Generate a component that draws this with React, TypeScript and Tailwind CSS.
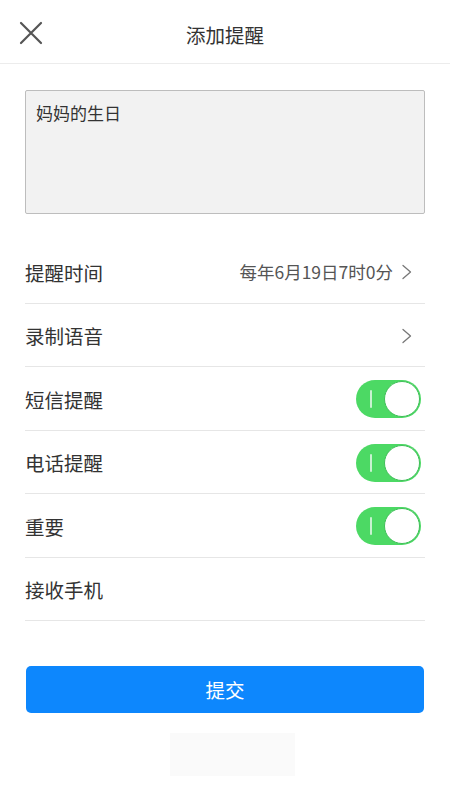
import React from 'react';

const font = { fontFamily: '"Noto Sans CJK SC", "Noto Sans", sans-serif' };

const Chevron = () => (
  <svg width="12" height="16" viewBox="0 0 12 16" fill="none" className="shrink-0">
    <path d="M2 1.5 L9.5 8 L2 14.5" stroke="#777" strokeWidth="1.3" strokeLinecap="round" strokeLinejoin="round" />
  </svg>
);

const Toggle = () => (
  <div className="relative w-[65px] h-[38px] rounded-full bg-[#4cd964] shrink-0">
    <div className="absolute left-[14px] top-[10px] w-[2px] h-[18px] bg-[#c8f2d0] rounded" />
    <div className="absolute right-[1px] top-[1px] w-[36px] h-[36px] rounded-full bg-white border border-[#3fbf58]" />
  </div>
);

interface RowProps {
  label: string;
  right?: React.ReactNode;
}

const Row: React.FC<RowProps> = ({ label, right }) => (
  <div className="flex items-center justify-between h-[63.5px] border-b border-[#e6e6e6] pt-[2px]">
    <span className="text-[19.5px] text-[#333]">{label}</span>
    {right}
  </div>
);

export default function App() {
  return (
    <div className="w-[450px] h-[800px] bg-white flex flex-col" style={font}>
      {/* header */}
      <div className="relative flex items-center justify-center h-[64px] border-b border-[#ececec] shrink-0">
        <button className="absolute left-[19px] top-[21px] w-[24px] h-[24px]">
          <svg width="24" height="24" viewBox="0 0 24 24" fill="none">
            <path d="M2 2 L22 22 M22 2 L2 22" stroke="#555" strokeWidth="2.2" strokeLinecap="round" />
          </svg>
        </button>
        <h1 className="text-[19.5px] text-[#333] pt-[6px]">添加提醒</h1>
      </div>

      <div className="px-[25px] flex flex-col">
        <div className="mt-[26px] h-[124px] bg-[#f2f2f2] border border-[#bdbdbd] rounded-[2px] px-[10px] pt-[9px]">
          <span className="text-[17px] text-[#333]">妈妈的生日</span>
        </div>

        <div className="mt-[26px] flex flex-col">
          <Row
            label="提醒时间"
            right={
              <div className="flex items-center gap-[8px] pr-[12px]">
                <span className="text-[17.5px] text-[#555]">每年6月19日7时0分</span>
                <Chevron />
              </div>
            }
          />
          <Row label="录制语音" right={<div className="pr-[12px]"><Chevron /></div>} />
          <Row label="短信提醒" right={<div className="pr-[4px]"><Toggle /></div>} />
          <Row label="电话提醒" right={<div className="pr-[4px]"><Toggle /></div>} />
          <Row label="重要" right={<div className="pr-[4px]"><Toggle /></div>} />
          <Row label="接收手机" />
        </div>

        <button className="mt-[45px] mx-[1px] h-[47px] rounded-[5px] bg-[#0d87fd] text-white text-[19.5px]">
          提交
        </button>

        <div className="mt-[20px] ml-[145px] w-[125px] h-[43px] bg-[#fafafa]" />
      </div>
    </div>
  );
}
